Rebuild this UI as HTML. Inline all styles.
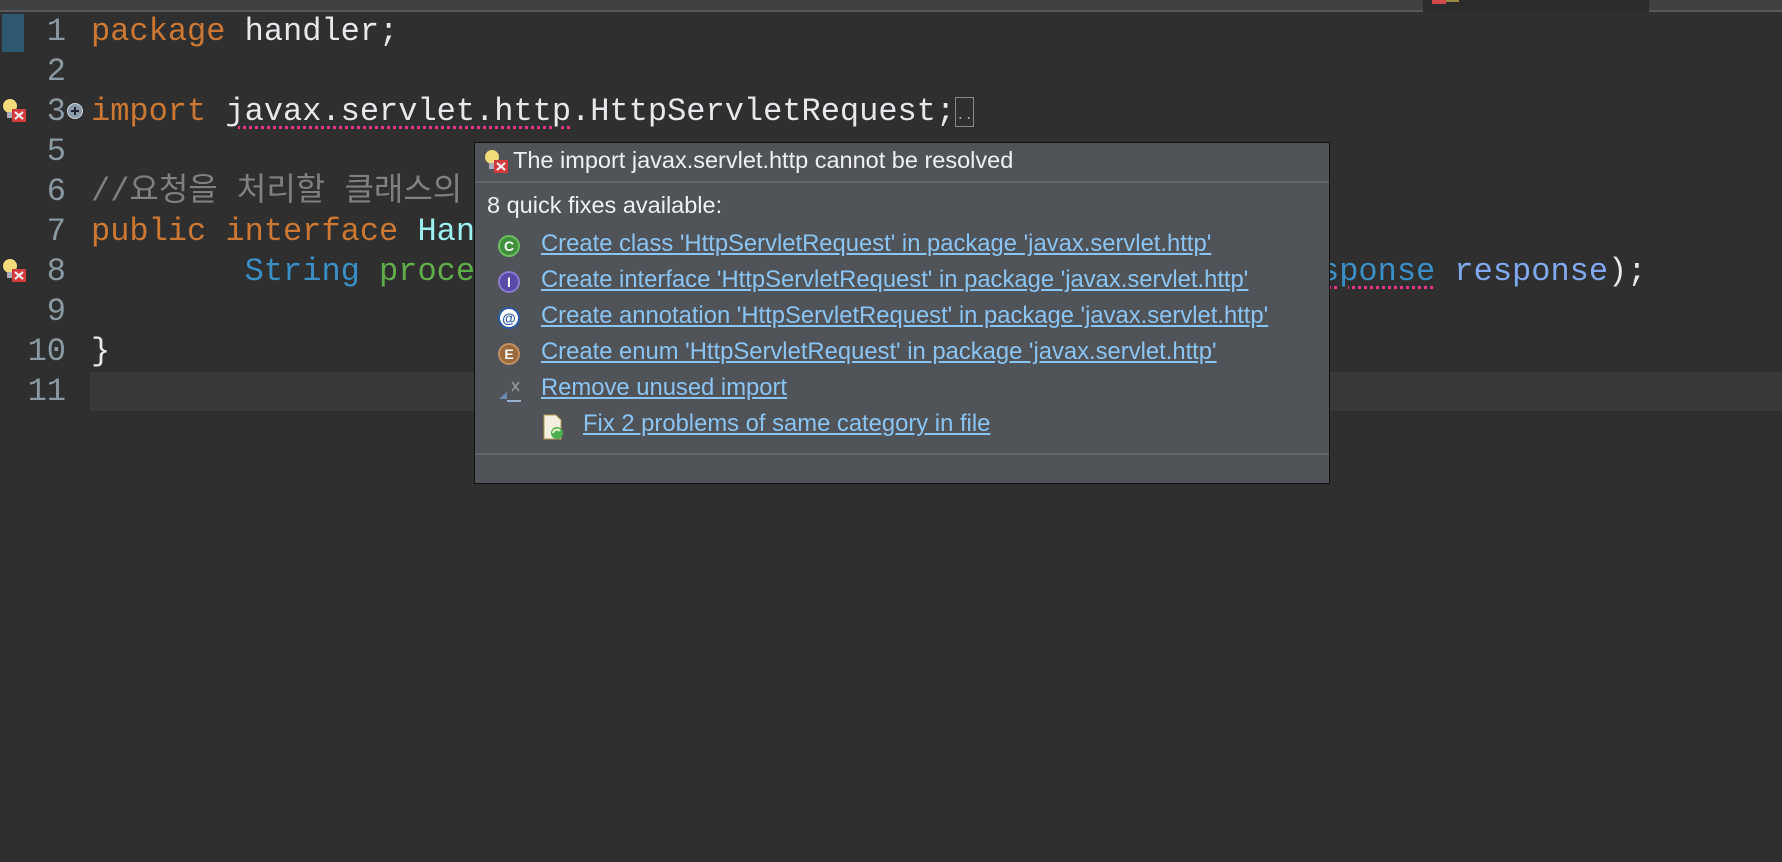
<!DOCTYPE html>
<html><head><meta charset="utf-8"><style>
*{margin:0;padding:0;box-sizing:border-box}
body{width:1782px;height:862px;background:#2f2f2f;position:relative;overflow:hidden;font-family:"Liberation Mono","Noto Sans CJK KR",monospace}
.tabbar{position:absolute;left:0;top:0;width:1782px;height:12px;background:#414143;border-bottom:2px solid #56575a}
.tab{position:absolute;top:0;height:12px;background:#2c2c2c;left:1423px;width:226px}
.row{position:absolute;left:0;height:40px;line-height:40px;font-size:32px;white-space:pre;width:1782px}
.ln{position:absolute;right:1716px;color:#8b9aa3}
.code{position:absolute;left:91px;color:#e8e8ec}
.k{color:#cc7832}.c{color:#808080}.t{color:#3a8fc6}.g{color:#5fae4a}.cy{color:#9bf0f0}.p{color:#7fa8ee}
.u{text-decoration:underline dotted #f0328a;text-underline-offset:6px;text-decoration-thickness:3px}
.hl{position:absolute;left:90px;top:372px;width:1692px;height:39px;background:#383838}
.err{position:absolute;left:1px;width:26px;height:26px}
.pop{position:absolute;left:474px;top:142px;width:856px;height:342px;background:#505459;border:1px solid #111;font-family:"Liberation Sans",sans-serif;color:#f0f0f0;font-size:23.5px}
.pop .sep{position:absolute;left:0;width:100%;height:2px;background:#62666b}
.fix{position:absolute;left:66px;color:#8ac4f3;text-decoration:underline;font-size:23.8px;white-space:nowrap}
.ic{position:absolute;left:23px;width:22px;height:22px;border-radius:50%;color:#fff;font:bold 14px "Liberation Sans",sans-serif;text-align:center;line-height:22px}
</style></head><body>
<div class="tabbar"><div class="tab"></div>
<div style="position:absolute;left:1432px;top:0;width:14px;height:4px;background:#d04a4a"></div>
<div style="position:absolute;left:1446px;top:0;width:13px;height:2px;background:#988a4a"></div></div>
<div style="position:absolute;left:2px;top:14px;width:22px;height:38px;background:#2e5f78;opacity:.9"></div>
<div class="hl"></div>

<div class="row" style="top:12px"><span class="ln">1</span><span class="code"><span class="k">package</span> handler;</span></div>
<div class="row" style="top:52px"><span class="ln">2</span></div>
<div class="row" style="top:92px"><span class="ln">3</span><span class="code"><span class="k">import</span> <span class="u">javax.servlet.http</span>.HttpServletRequest;<span style="display:inline-block;width:19px;height:30px;border:1px solid #888;vertical-align:middle;font-size:14px;line-height:36px;color:#aaa">..</span></span></div>
<div class="row" style="top:132px"><span class="ln">5</span></div>
<div class="row" style="top:172px"><span class="ln">6</span><span class="code c">//요청을 처리할 클래스의 공통 인터페이스</span></div>
<div class="row" style="top:212px"><span class="ln">7</span><span class="code"><span class="k">public</span> <span class="k">interface</span> <span class="cy">Handler</span> {</span></div>
<div class="row" style="top:252px"><span class="ln">8</span><span class="code">        <span class="t">String</span> <span class="g">process</span>(<span class="t u">HttpServletRequest</span> <span class="p">request</span>, <span class="t u">HttpServletResponse</span> <span class="p">response</span>);</span></div>
<div class="row" style="top:292px"><span class="ln">9</span></div>
<div class="row" style="top:332px"><span class="ln">10</span><span class="code">}</span></div>
<div class="row" style="top:372px"><span class="ln">11</span></div>

<svg style="position:absolute;left:66px;top:102px" width="18" height="18"><circle cx="9" cy="9" r="7.5" fill="#8a9aa8" stroke="#cfd6dc"/><path d="M5 9h8M9 5v8" stroke="#223" stroke-width="2"/></svg>
<svg class="err" style="top:98px" viewBox="0 0 26 26"><circle cx="9" cy="8" r="7" fill="#f3dc7a"/><rect x="6" y="14" width="6" height="6" fill="#aab"/><rect x="11" y="11" width="14" height="13" fill="#d23c3c"/><path d="M14 14l8 7M22 14l-8 7" stroke="#fff" stroke-width="2"/></svg>
<svg class="err" style="top:258px" viewBox="0 0 26 26"><circle cx="9" cy="8" r="7" fill="#f3dc7a"/><rect x="6" y="14" width="6" height="6" fill="#aab"/><rect x="11" y="11" width="14" height="13" fill="#d23c3c"/><path d="M14 14l8 7M22 14l-8 7" stroke="#fff" stroke-width="2"/></svg>

<div class="pop">
<svg style="position:absolute;left:8px;top:6px" width="26" height="26" viewBox="0 0 26 26"><circle cx="9" cy="8" r="7" fill="#f3dc7a"/><rect x="6" y="14" width="6" height="6" fill="#aab"/><rect x="11" y="11" width="14" height="13" fill="#d23c3c"/><path d="M14 14l8 7M22 14l-8 7" stroke="#fff" stroke-width="2"/></svg>
<div style="position:absolute;left:38px;top:4px">The import javax.servlet.http cannot be resolved</div>
<div class="sep" style="top:38px"></div>
<div style="position:absolute;left:12px;top:49px">8 quick fixes available:</div>
<div class="ic" style="top:92px;background:#3f8f3c;border:2px solid #6cbf5f;line-height:18px">C</div><div class="fix" style="top:87px">Create class 'HttpServletRequest' in package 'javax.servlet.http'</div>
<div class="ic" style="top:128px;background:#5a4aa8;border:2px solid #8a7ad0;line-height:18px">I</div><div class="fix" style="top:123px">Create interface 'HttpServletRequest' in package 'javax.servlet.http'</div>
<div class="ic" style="top:164px;background:#fff;color:#2a5aa8;border:2px solid #2a5aa8;line-height:18px">@</div><div class="fix" style="top:159px">Create annotation 'HttpServletRequest' in package 'javax.servlet.http'</div>
<div class="ic" style="top:200px;background:#9a6a3a;border:2px solid #c09060;line-height:18px">E</div><div class="fix" style="top:195px">Create enum 'HttpServletRequest' in package 'javax.servlet.http'</div>
<svg style="position:absolute;left:22px;top:236px" width="28" height="24"><path d="M2 20l8-7v7z" fill="#6a8ab0"/><path d="M10 22h14" stroke="#9ab0d0" stroke-width="2"/><path d="M15 3l7 9M22 3l-7 9" stroke="#999" stroke-width="1.5"/></svg>
<div class="fix" style="top:231px">Remove unused import</div>
<svg style="position:absolute;left:66px;top:270px" width="28" height="28"><path d="M3 2h12l5 5v19H3z" fill="#f4f0e0" stroke="#b09a50"/><circle cx="16" cy="20" r="6" fill="#4caf50"/><path d="M12 20a4 4 0 0 1 7-2" stroke="#e8f5c8" stroke-width="2" fill="none"/></svg>
<div class="fix" style="top:267px;left:108px">Fix 2 problems of same category in file</div>
<div class="sep" style="top:310px"></div>
</div>
</body></html>
